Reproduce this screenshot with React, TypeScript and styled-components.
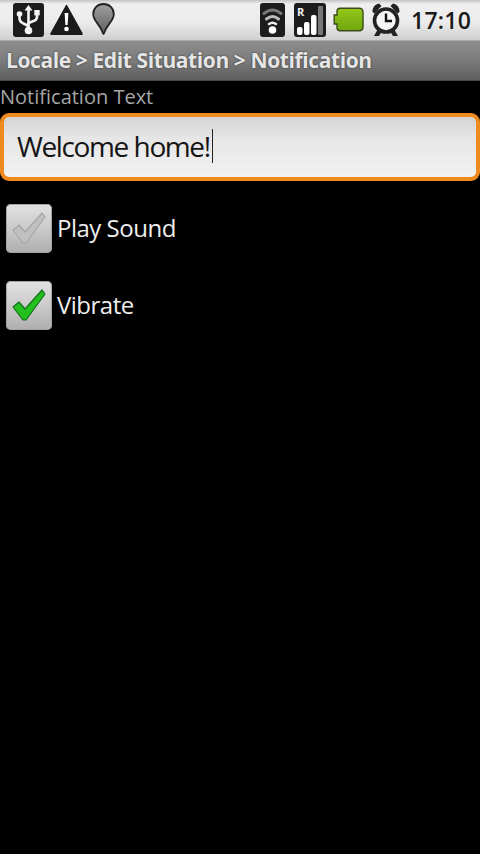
import React from "react";
import styled, { createGlobalStyle } from "styled-components";

const GlobalStyle = createGlobalStyle`
	html, body {
		margin: 0;
		padding: 0;
		background: #000;
	}
	* {
		box-sizing: border-box;
	}
`;

const Screen = styled.div`
	width: 480px;
	height: 854px;
	background: #000;
	overflow: hidden;
	font-family: "Open Sans", "Noto Sans", sans-serif;
`;

const StatusBar = styled.div`
	height: 40px;
	display: flex;
	align-items: center;
	justify-content: space-between;
	padding: 0 9px 1px 13px;
	background: linear-gradient(#c4c4c4 0, #efefef 10%, #ececec 55%, #cfcfcf 100%);
`;

const IconGroup = styled.div<{ $gap: number }>`
	display: flex;
	align-items: center;
	gap: ${(p) => p.$gap}px;
`;

const Clock = styled.span`
	font-size: 23px;
	font-weight: 600;
	color: #1a1a1a;
	margin-left: 3px;
	letter-spacing: 0.2px;
`;

const IconSlot = styled.div<{ $left?: number; $right?: number }>`
	display: flex;
	margin-left: ${(p) => p.$left ?? 0}px;
	margin-right: ${(p) => p.$right ?? 0}px;
`;

const TitleBar = styled.div`
	height: 41px;
	display: flex;
	align-items: center;
	padding: 0 0 2px 6px;
	background: linear-gradient(#8e8e8e 0, #7b7b7b 50%, #5f5f5f 97%, #333 100%);
	border-top: 1px solid #a8a8a8;
	font-size: 21px;
	font-weight: 700;
	color: #e6e6e6;
	letter-spacing: -0.4px;
	text-shadow: 0 0 2px #2a2a2a;
	white-space: nowrap;
`;

const Content = styled.div`
	display: flex;
	flex-direction: column;
`;

const FieldLabel = styled.div`
	height: 32px;
	padding: 2px 0 0 0;
	font-size: 20px;
	line-height: 28px;
	color: #a6a6a6;
`;

const TextField = styled.div`
	height: 68px;
	display: flex;
	align-items: center;
	padding: 0 0 2px 13px;
	border: 4px solid #ee8a20;
	border-radius: 9px;
	background: linear-gradient(#d4d4d4 0, #e6e6e6 35%, #f2f2f2 100%);
	font-size: 28px;
	letter-spacing: -1.4px;
	color: #151515;
`;

const Caret = styled.span`
	display: inline-block;
	width: 1px;
	height: 34px;
	margin-left: 2px;
	background: #222;
`;

const CheckList = styled.div`
	display: flex;
	flex-direction: column;
	padding-top: 9px;
`;

const CheckRow = styled.div`
	height: 77px;
	display: flex;
	align-items: center;
	padding: 0 0 2px 6px;
	gap: 5px;
	font-size: 24px;
	letter-spacing: -0.5px;
	color: #eee;
`;

const CheckBox = styled.div`
	width: 46px;
	height: 49px;
	margin-top: 2px;
	display: flex;
	align-items: center;
	justify-content: center;
	border-radius: 5px;
	background: linear-gradient(#e2e2e2 0, #cdcdcd 45%, #aeaeae 100%);
	box-shadow: inset 0 0 0 1px #a4a4a4;
`;

const UsbIcon = () => (
	<svg width="31" height="34" viewBox="0 0 31 34">
		<rect width="31" height="34" rx="3" fill="#1c1c1c" />
		<g stroke="#f4f4f4" strokeWidth="2.6" fill="none" strokeLinecap="round">
			<path d="M15.500 6V27" />
			<path d="M6.500 13V15Q6.500 19 10.500 20.500L15.500 23" />
			<path d="M24 12V14Q24 17 20.500 18L15.500 20" />
		</g>
		<path d="M15.500 2L19.500 7.500H11.500Z" fill="#f4f4f4" />
		<circle cx="15.500" cy="27.500" r="3.800" fill="#f4f4f4" />
		<circle cx="6.500" cy="11" r="2.800" fill="#f4f4f4" />
		<rect x="21.300" y="7" width="5.400" height="5.400" fill="#f4f4f4" />
	</svg>
);

const WarningIcon = () => (
	<svg width="33" height="31" viewBox="0 0 33 31">
		<path
			d="M16.500 1.500L32 29.500Q32 30.500 31 30.500H2Q1 30.500 1 29.500Z"
			fill="#1a1a1a"
			stroke="#1a1a1a"
			strokeLinejoin="round"
			strokeWidth="1.500"
		/>
		<path d="M14.600 9H18.400L17.600 21H15.400Z" fill="#fff" />
		<circle cx="16.500" cy="25" r="2.300" fill="#fff" />
	</svg>
);

const PinIcon = () => (
	<svg width="23" height="34" viewBox="0 0 23 34">
		<defs>
			<linearGradient id="pinFill" x1="0" y1="0" x2="0" y2="1">
				<stop offset="0" stopColor="#a0a0a0" />
				<stop offset="1" stopColor="#5e5e5e" />
			</linearGradient>
		</defs>
		<path
			d="M11.500 1C5.500 1 1.200 5.500 1.200 11.200C1.200 17.500 7.500 21 10.500 29Q11.500 33 12.500 29C15.500 21 21.800 17.500 21.800 11.200C21.800 5.500 17.500 1 11.500 1Z"
			fill="url(#pinFill)"
			stroke="#222"
			strokeWidth="1.800"
		/>
	</svg>
);

const WifiIcon = () => (
	<svg width="25" height="34" viewBox="0 0 25 34">
		<rect width="25" height="34" rx="3" fill="#1c1c1c" />
		<g fill="none" strokeLinecap="round">
			<path d="M4 10.500Q12.500 3.500 21 10.500" stroke="#777" strokeWidth="3" />
			<path d="M6.500 16Q12.500 11 18.500 16" stroke="#bbb" strokeWidth="3" />
			<path d="M9 21Q12.500 18.500 16 21" stroke="#eee" strokeWidth="2.500" />
		</g>
		<circle cx="12.500" cy="27" r="3.800" fill="#fff" />
	</svg>
);

const SignalIcon = () => (
	<svg width="32" height="34" viewBox="0 0 32 34">
		<rect width="32" height="34" rx="3" fill="#1c1c1c" />
		<text x="3" y="13" fontFamily="Open Sans, sans-serif" fontSize="11" fontWeight="700" fill="#eee">
			R
		</text>
		<rect x="3" y="24" width="5.500" height="8" rx="2" fill="#fff" />
		<rect x="10" y="19" width="5.500" height="13" rx="2" fill="#fff" />
		<rect x="17" y="12" width="5.500" height="20" rx="2" fill="#fff" />
		<rect x="24" y="3" width="5" height="29" rx="1" fill="#777" />
	</svg>
);

const BatteryIcon = () => (
	<svg width="31" height="25" viewBox="0 0 31 25">
		<defs>
			<linearGradient id="batFill" x1="0" y1="0" x2="0" y2="1">
				<stop offset="0" stopColor="#94c81a" />
				<stop offset="1" stopColor="#6ea60e" />
			</linearGradient>
		</defs>
		<path
			d="M7 1.200H26Q30 1.200 30 5.200V19.800Q30 23.800 26 23.800H7Q4 23.800 4 20.800V17H1.200V8H4V4.200Q4 1.200 7 1.200Z"
			fill="url(#batFill)"
			stroke="#3a4a18"
			strokeWidth="1.400"
		/>
	</svg>
);

const AlarmIcon = () => (
	<svg width="30" height="35" viewBox="0 0 30 35">
		<path d="M1.500 10Q1.500 2.500 8 1.500L10.500 4L3.500 11.500Z" fill="#222" />
		<path d="M28.500 10Q28.500 2.500 22 1.500L19.500 4L26.500 11.500Z" fill="#222" />
		<path d="M7 27L3 34H8L11 29ZM23 27L27 34H22L19 29Z" fill="#222" />
		<circle cx="15" cy="18.500" r="11.500" fill="#f4f4f4" stroke="#222" strokeWidth="3.600" />
		<path d="M15 11.500V19H21" stroke="#111" strokeWidth="2.400" fill="none" />
	</svg>
);

const CheckMark = ({ green }: { green?: boolean }) => (
	<svg width="36" height="36" viewBox="0 0 36 36">
		<path
			d="M2 19L8 14L14 21L31 2L34 6L15 32H12Z"
			fill={green ? "#22bf1e" : "#c0c0c0"}
			stroke={green ? "#14701a" : "#a6a6a6"}
			strokeWidth="1.200"
			strokeLinejoin="round"
		/>
	</svg>
);

const App = () => (
	<Screen>
		<GlobalStyle />
		<StatusBar>
			<IconGroup $gap={6}>
				<UsbIcon />
				<WarningIcon />
				<IconSlot $left={3}>
					<PinIcon />
				</IconSlot>
			</IconGroup>
			<IconGroup $gap={7}>
				<IconSlot $right={2}>
					<WifiIcon />
				</IconSlot>
				<SignalIcon />
				<BatteryIcon />
				<AlarmIcon />
				<Clock>17:10</Clock>
			</IconGroup>
		</StatusBar>
		<TitleBar>Locale &gt; Edit Situation &gt; Notification</TitleBar>
		<Content>
			<FieldLabel>Notification Text</FieldLabel>
			<TextField>
				Welcome home!
				<Caret />
			</TextField>
			<CheckList>
				<CheckRow>
					<CheckBox>
						<CheckMark />
					</CheckBox>
					Play Sound
				</CheckRow>
				<CheckRow>
					<CheckBox>
						<CheckMark green />
					</CheckBox>
					Vibrate
				</CheckRow>
			</CheckList>
		</Content>
	</Screen>
);

export default App;
